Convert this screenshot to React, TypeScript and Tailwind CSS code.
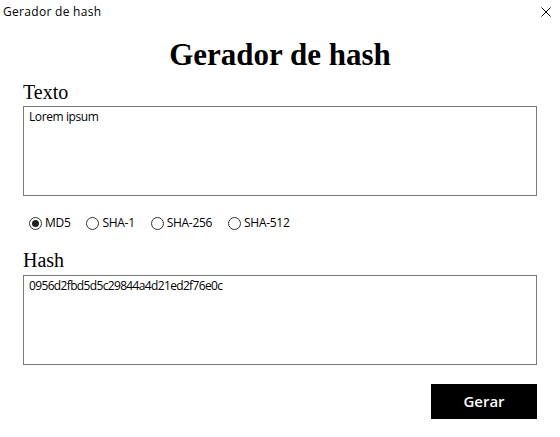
import { useState } from 'react';

const algos = ['MD5', 'SHA-1', 'SHA-256', 'SHA-512'];

const ui = { fontFamily: '"Open Sans", "Noto Sans", sans-serif' };
const serif = { fontFamily: '"Liberation Serif", "DejaVu Serif", serif' };

export default function App() {
  const [text, setText] = useState('Lorem ipsum');
  const [algo, setAlgo] = useState('MD5');

  return (
    <div className="w-[560px] h-[437px] bg-white text-black flex flex-col" style={ui}>
      {/* barra de título */}
      <div className="h-6 flex items-center justify-between pl-[3px] pr-[9px]">
        <span className="text-[12px] tracking-[0.3px]">Gerador de hash</span>
        <svg width="10" height="10" viewBox="0 0 10 10" className="text-black">
          <path d="M0.5 0.5 L9.5 9.5 M9.5 0.5 L0.5 9.5" stroke="currentColor" strokeWidth="1" />
        </svg>
      </div>

      <div className="flex flex-col px-[23px]">
        <h1 className="mt-4 text-center text-[31px] leading-[30px] font-bold" style={serif}>
          Gerador de hash
        </h1>

        <label className="mt-[12px] mb-[4px] text-[20px] leading-[20px]" style={serif}>
          Texto
        </label>
        <textarea
          value={text}
          onChange={(e) => setText(e.target.value)}
          className="h-[90px] w-full resize-none border border-[#7a7a7a] px-[5px] py-[2px] text-[12px] leading-[16px] tracking-[-0.4px] outline-none"
        />

        <div className="mt-[19px] h-4 flex items-center gap-[16px] pl-[6px] text-[12px] tracking-[-0.3px]">
          {algos.map((a) => (
            <button key={a} onClick={() => setAlgo(a)} className="flex items-center gap-[3px]">
              <span className="w-[13px] h-[13px] rounded-full border border-[#333] flex items-center justify-center">
                {algo === a && <span className="w-[7px] h-[7px] rounded-full bg-[#222]" />}
              </span>
              <span>{a}</span>
            </button>
          ))}
        </div>

        <label className="mt-[19px] mb-[5px] text-[20px] leading-[20px]" style={serif}>
          Hash
        </label>
        <div className="h-[90px] w-full border border-[#7a7a7a] px-[5px] py-[2px] text-[12px] leading-[16px] tracking-[-0.65px]">
          0956d2fbd5d5c29844a4d21ed2f76e0c
        </div>

        <div className="mt-[19px] flex justify-end">
          <button className="w-[106px] h-[35px] bg-black text-white text-[15px] font-semibold">Gerar</button>
        </div>
      </div>
    </div>
  );
}
